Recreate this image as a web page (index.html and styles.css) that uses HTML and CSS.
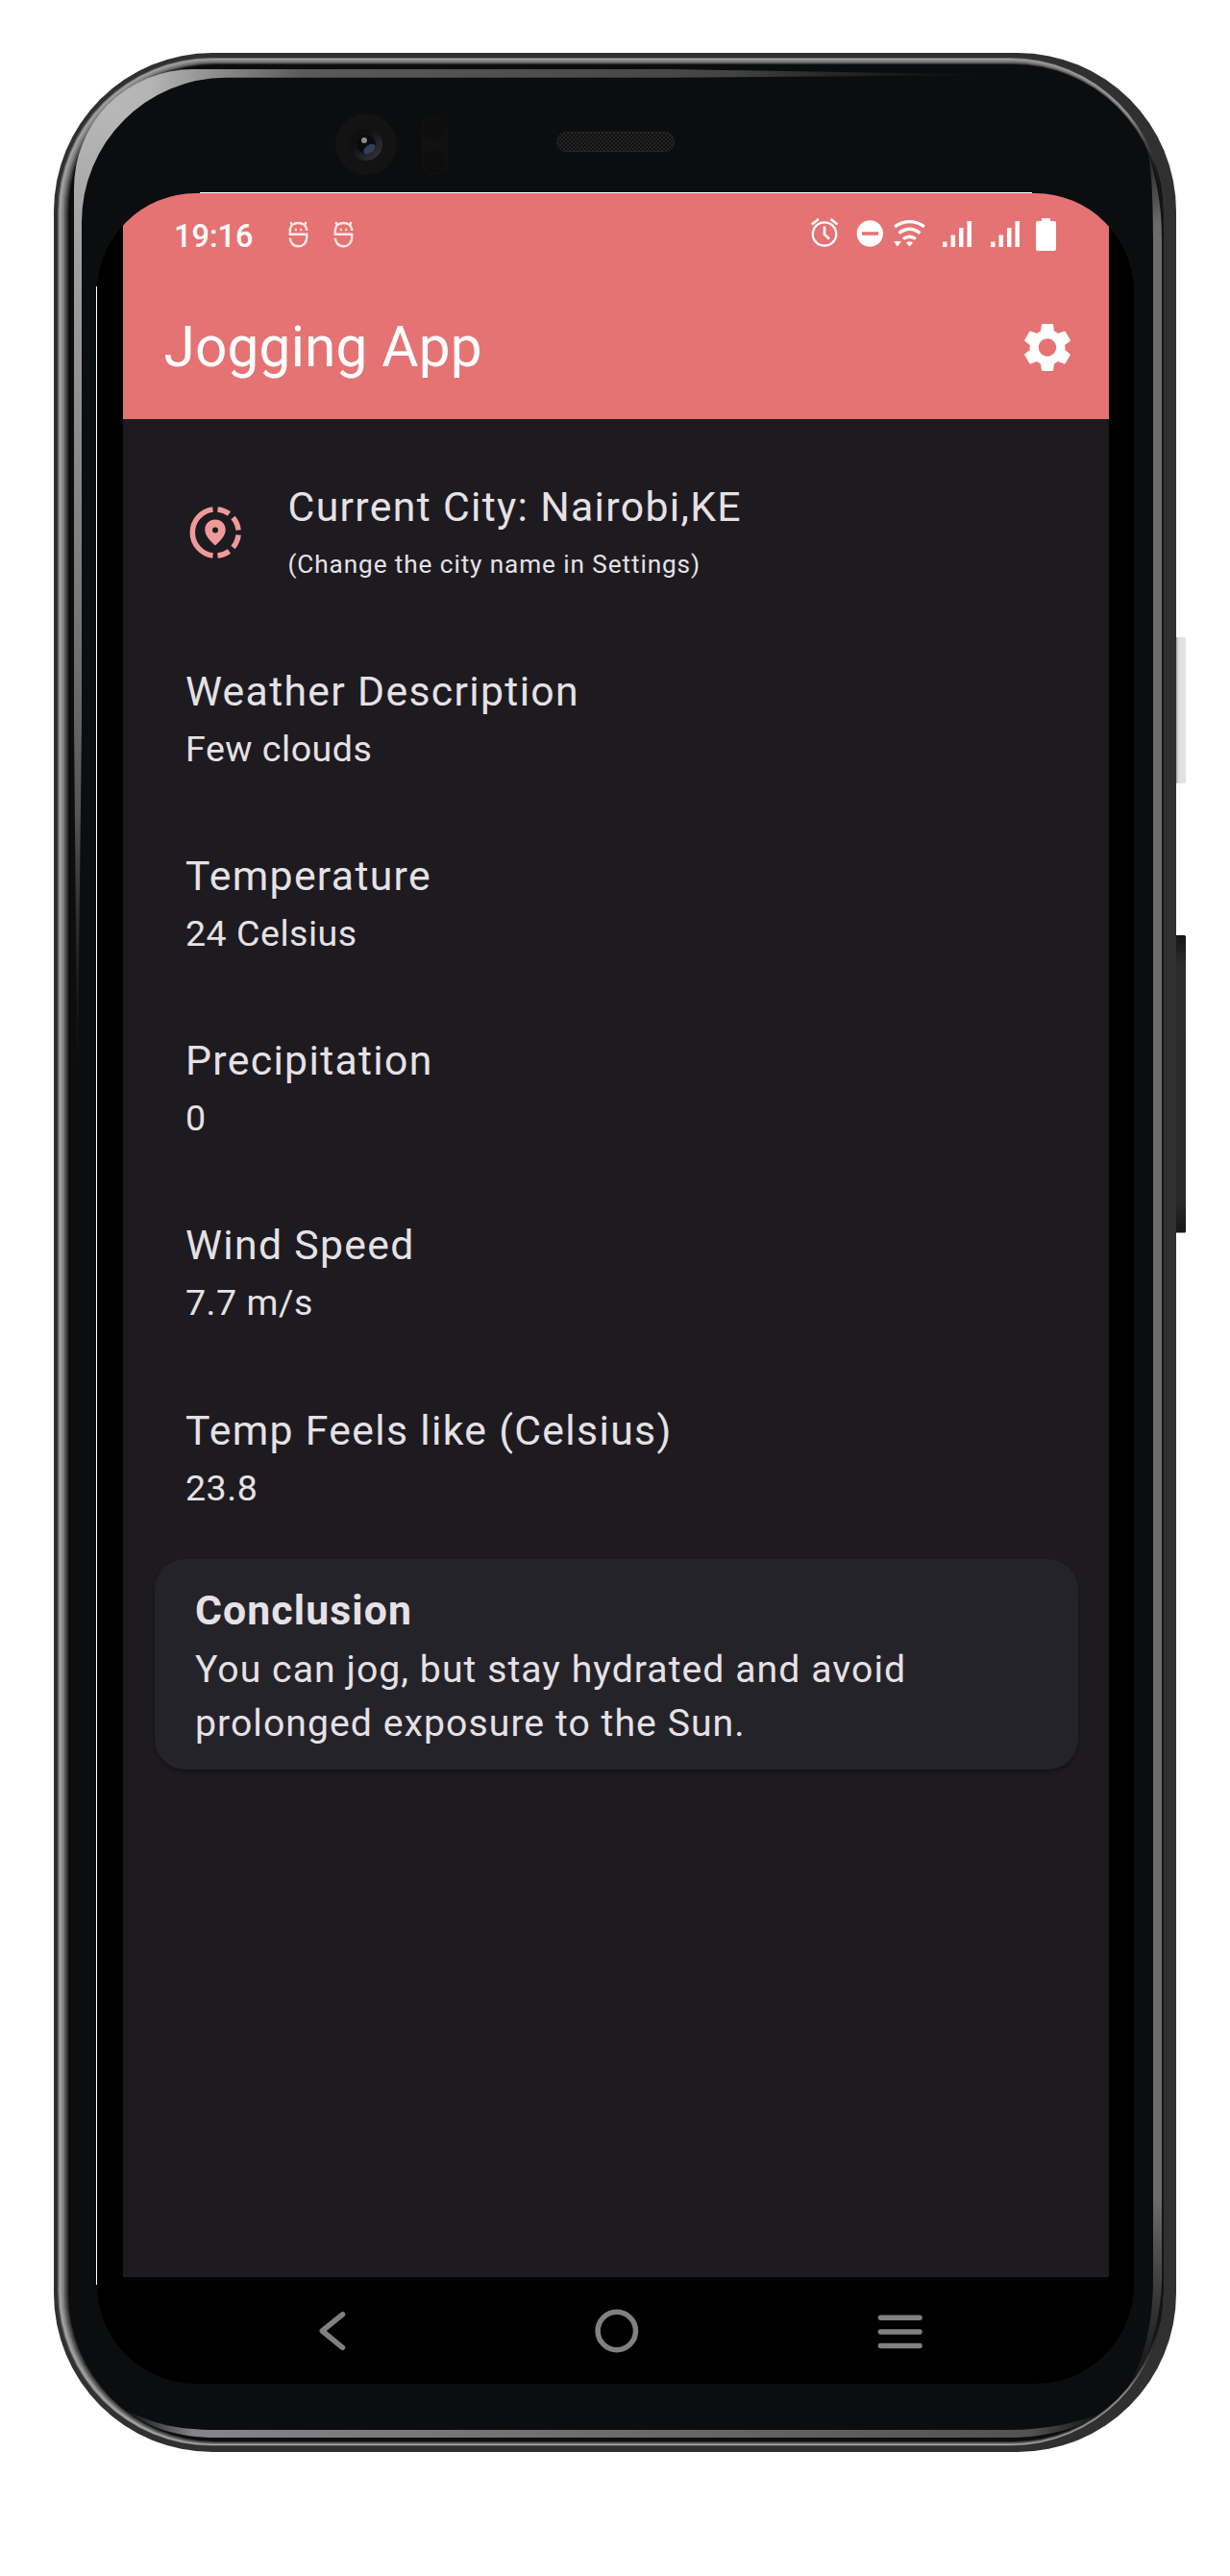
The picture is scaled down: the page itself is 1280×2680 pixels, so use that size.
FILE: index.html
```html
<!DOCTYPE html>
<html lang="en">
<head>
<meta charset="utf-8">
<title>Jogging App</title>
<link rel="stylesheet" href="styles.css">
</head>
<body>
<main class="phone">
  <svg class="phone-art" viewBox="0 0 1280 2680" aria-hidden="true">
    <defs>
      <linearGradient id="shade" gradientUnits="userSpaceOnUse" x1="1175" y1="0" x2="1207" y2="0">
        <stop offset="0" stop-color="#0c0d0e" stop-opacity="0"/><stop offset="1" stop-color="#141415"/>
      </linearGradient>
      <linearGradient id="fadeLeft" gradientUnits="userSpaceOnUse" x1="0" y1="110" x2="0" y2="1136">
        <stop offset="0" stop-color="#b8b8b8"/><stop offset=".12" stop-color="#a4a4a4"/><stop offset=".5" stop-color="#7a7a7a"/><stop offset=".72" stop-color="#555"/><stop offset="1" stop-color="#222" stop-opacity="0"/>
      </linearGradient>
      <linearGradient id="fadeTop" gradientUnits="userSpaceOnUse" x1="110" y1="0" x2="1040" y2="0">
        <stop offset="0" stop-color="#b8b8b8"/><stop offset=".05" stop-color="#b4b4b4"/><stop offset=".22" stop-color="#5a5a5a"/><stop offset=".7" stop-color="#444"/><stop offset="1" stop-color="#222" stop-opacity="0"/>
      </linearGradient>
      <linearGradient id="fadeRight" gradientUnits="userSpaceOnUse" x1="0" y1="140" x2="0" y2="2500">
        <stop offset="0" stop-color="#6c6c6e" stop-opacity="0"/><stop offset=".04" stop-color="#6c6c6e"/><stop offset=".91" stop-color="#6c6c6e"/><stop offset="1" stop-color="#555" stop-opacity="0"/>
      </linearGradient>
      <linearGradient id="fadeBottom" gradientUnits="userSpaceOnUse" x1="130" y1="0" x2="1155" y2="0">
        <stop offset="0" stop-color="#858587" stop-opacity="0"/><stop offset=".07" stop-color="#858587"/><stop offset=".92" stop-color="#525252"/><stop offset="1" stop-color="#444" stop-opacity="0"/>
      </linearGradient>
      <linearGradient id="lens" x1="0" y1="0" x2="1" y2="1"><stop offset=".35" stop-color="#101011"/><stop offset="1" stop-color="#3a3a3d"/></linearGradient>
      <linearGradient id="keyLight" x1="0" y1="0" x2="1" y2="0"><stop offset=".1" stop-color="#999"/><stop offset=".4" stop-color="#e0e0e0"/><stop offset="1" stop-color="#e4e4e4"/></linearGradient>
      <linearGradient id="keyDark" x1="0" y1="0" x2="0" y2="1"><stop offset="0" stop-color="#151515"/><stop offset=".1" stop-color="#2c2c2c"/><stop offset=".9" stop-color="#292929"/><stop offset="1" stop-color="#161616"/></linearGradient>
      <pattern id="mesh" width="4" height="4" patternUnits="userSpaceOnUse"><rect width="4" height="4" fill="#101010"/><path d="M0 0h2v2H0zM2 2h2v2H2z" fill="#232323"/></pattern>
    </defs>
    <rect x="1222" y="663" width="12" height="152" rx="1.500" fill="url(#keyLight)"/>
    <rect x="1222" y="973" width="12" height="309.500" rx="1.500" fill="url(#keyDark)"/>
    <rect x="56" y="55" width="1168" height="2496" rx="165" fill="#303030"/>
    <rect x="60" y="60" width="1151" height="2484.500" rx="160" fill="#6a6a6a"/>
    <rect x="61.500" y="61" width="1149" height="2483" rx="159" fill="#a4a4a4"/>
    <rect x="63.500" y="62" width="1146.500" height="2481" rx="158" fill="#8c8c8c"/>
    <rect x="65.500" y="63.500" width="1144" height="2479" rx="157" fill="#767676"/>
    <rect x="67" y="65" width="1142" height="2477" rx="156" fill="#555"/>
    <rect x="69" y="66" width="1139.500" height="2475" rx="155" fill="#333"/>
    <rect x="71" y="67" width="1137" height="2473" rx="153" fill="#0c0d0e"/>
    <rect x="62" y="62" width="1147" height="2481" rx="158" fill="none" stroke="url(#shade)" stroke-width="4"/>
    <path d="M80.500 1136L77 750V197A125 125 0 0 1 112.600 108.600L129 125A150 150 0 0 0 85 231V750Z" fill="url(#fadeLeft)"/>
    <path d="M112 109.200A125 125 0 0 1 201 72H700L1040 78L700 80.700H235A150 150 0 0 0 128.400 125.600Z" fill="url(#fadeTop)"/>
    <path d="M1192 145C1204 190 1209 210 1209 250V2370C1208 2420 1192 2470 1165 2500C1190 2460 1200 2420 1200 2370V250C1200 200 1198 170 1192 145Z" fill="url(#fadeRight)"/>
    <path d="M130 2507C160 2522 185 2528 225 2528H1050C1090 2528 1125 2520 1155 2507C1125 2526 1090 2536 1050 2536H225C185 2536 155 2526 130 2507Z" fill="url(#fadeBottom)"/>
    <circle cx="381" cy="150" r="32" fill="#131313"/>
    <circle cx="381" cy="150" r="17" fill="url(#lens)"/>
    <circle cx="381" cy="150" r="10" fill="#0b0b0e"/>
    <ellipse cx="384.500" cy="155" rx="7" ry="4" transform="rotate(-35 384.500 155)" fill="#353d5c"/>
    <circle cx="379" cy="146" r="3" fill="#8c8c8c"/>
    <rect x="438" y="120" width="28" height="62" rx="14" fill="#111"/>
    <circle cx="452" cy="133.500" r="11.500" fill="#0e0e0e"/><circle cx="452" cy="168" r="11.500" fill="#0e0e0e"/>
    <rect x="579.500" y="137.500" width="122" height="20" rx="10" fill="url(#mesh)" stroke="#252525"/>
    <path d="M208 200.500H1074" stroke="#fff"/>
    <path d="M100.500 298V2377" stroke="#fff"/>
  </svg>

  <section class="display">
    <div class="app">
      <header class="top">
        <div class="status">
          <span class="clock">19:16</span>
          <svg class="badge" viewBox="0 0 21 28"><use href="#mascot"/></svg>
          <svg class="badge badge-next" viewBox="0 0 21 28"><g id="mascot" fill="none" stroke="#ffe9e8" stroke-width="2.400"><path d="M19.200 10V9.500C19 5 15.500 2 10.500 2S2 5 1.800 9.500V13.800H19.200V17.500C19.200 22.500 15.500 26.300 10.500 26.300S2 22.500 1.800 17.800"/><path d="M4 4.500L2.500 1M17 4.500L18.500 1" /><path d="M6.800 9h2M12.200 9h2"/></g></svg>
          <svg class="indicators" viewBox="0 0 256 36">
            <g fill="none" stroke="#fff" stroke-width="2.300"><circle cx="14" cy="17.500" r="12.200"/><path d="M14 9.500v8.500l5 4.500M.8 7.500l7-5.500M20.500 2l7 5.500" stroke-width="2.600"/></g>
            <circle cx="61.300" cy="17" r="13.700" fill="#fff"/><path d="M53 17h17" stroke="#e57373" stroke-width="3.500"/>
            <g fill="none" stroke="#fff" stroke-width="3.200"><path d="M87 9.800Q102.500-.5 118 9.800M91.500 16.500Q102.500 8 113.500 16.500M96 22.500Q102.500 18 109 22.500"/></g>
            <path d="M86 25h8l-4 5.500zM99 26.500q3.500-2.500 7 0l-3.500 4z" fill="#fff"/>
            <path d="M137 25.500h4.500v5.500H137zM145.500 18.500h4.500V31h-4.500zM154 11h4.500v20H154zM162.500 4h4.500v27h-4.500zM187 25.500h4.500v5.500H187zM195.500 18.500h4.500V31h-4.500zM204 11h4.500v20H204zM212.500 4h4.500v27h-4.500z" fill="#fff"/>
            <path d="M240 1h9v3h4q2 0 2 2v27q0 2-2 2h-17q-2 0-2-2V6q0-2 2-2h4z" fill="#fff"/>
          </svg>
        </div>
        <div class="title-bar">
          <h1>Jogging App</h1>
          <svg class="gear" viewBox="1.900 1.600 20.200 20.800"><path fill="#fff" d="M19.140 12.940c.04-.3.060-.61.060-.94 0-.32-.02-.64-.07-.94l2.030-1.580c.18-.14.23-.41.120-.61l-1.920-3.320c-.12-.22-.37-.29-.59-.22l-2.390.96c-.5-.38-1.030-.7-1.620-.94l-.36-2.540c-.04-.24-.24-.41-.48-.41h-3.840c-.24 0-.43.17-.47.41l-.36 2.540c-.59.24-1.130.57-1.620.94l-2.390-.96c-.22-.08-.47 0-.59.22L2.740 8.870c-.12.21-.08.47.12.61l2.030 1.580c-.05.3-.09.63-.09.94s.02.64.07.94l-2.030 1.580c-.18.14-.23.41-.12.61l1.920 3.320c.12.22.37.29.59.22l2.390-.96c.5.38 1.030.7 1.620.94l.36 2.540c.05.24.24.41.48.41h3.840c.24 0 .44-.17.47-.41l.36-2.540c.59-.24 1.130-.56 1.620-.94l2.390.96c.22.08.47 0 .59-.22l1.920-3.320c.12-.22.07-.47-.12-.61l-2.010-1.580zM12 15.600c-1.980 0-3.600-1.620-3.600-3.600s1.620-3.600 3.600-3.600 3.600 1.620 3.600 3.600-1.620 3.600-3.600 3.600z"/></svg>
        </div>
      </header>

      <div class="content">
        <div class="city">
          <svg class="pin" viewBox="0 0 54 54">
            <g fill="none" stroke="#ef9a9a" stroke-width="5.500"><path d="M24.500 2.900A24.300 24.300 0 0 0 24.500 51.100M29.500 2.900A24.300 24.300 0 0 1 41.500 7.500M45.500 11.500A24.300 24.300 0 0 1 51.100 24.500M51.100 29.500A24.300 24.300 0 0 1 45.500 42.500M41.500 46.500A24.300 24.300 0 0 1 29.500 51.100"/></g>
            <path fill="#ef9a9a" fill-rule="evenodd" d="M27 13.500c-6 0-10.700 4.600-10.700 10.500C16.300 30 21 35.300 27 40.500 33 35.300 37.700 30 37.700 24c0-5.900-4.700-10.500-10.700-10.500zM27 21.500a3 3 0 1 1 0 6 3 3 0 0 1 0-6z"/>
          </svg>
          <div class="city-text">
            <h2>Current City: Nairobi,KE</h2>
            <p class="hint">(Change the city name in Settings)</p>
          </div>
        </div>
        <dl class="readings">
          <div class="reading"><dt>Weather Description</dt><dd>Few clouds</dd></div>
          <div class="reading"><dt>Temperature</dt><dd>24 Celsius</dd></div>
          <div class="reading"><dt>Precipitation</dt><dd>0</dd></div>
          <div class="reading"><dt>Wind Speed</dt><dd>7.7 m/s</dd></div>
          <div class="reading"><dt>Temp Feels like (Celsius)</dt><dd>23.8</dd></div>
        </dl>
        <article class="card">
          <h2>Conclusion</h2>
          <p>You can jog, but stay hydrated and avoid<br>prolonged exposure to the Sun.</p>
        </article>
      </div>
    </div>

    <nav class="nav">
      <svg viewBox="0 0 48 48"><path d="M35.500 6.800L14.300 24L35.500 41.300"/></svg>
      <svg viewBox="0 0 48 48"><circle cx="24.800" cy="24" r="19.700"/></svg>
      <svg viewBox="0 0 48 48"><path d="M3.400 10.200h40.600M3.400 24.900h40.600M3.400 39.600h40.600"/></svg>
    </nav>
  </section>
</main>
</body>
</html>
```
FILE: styles.css
```css
* { box-sizing: border-box; }
body { margin: 0; background: #fff; font-family: Roboto, sans-serif; }
h1, h2, p, dl, dt, dd { margin: 0; font-weight: 400; }
svg { display: block; flex: none; }

.phone {
  position: relative;
  width: 1280px;
  height: 2680px;
  padding: 201px 100px 200px 101px;
}
.phone-art { position: absolute; inset: 0; width: 1280px; height: 2680px; }

.display {
  position: relative;
  display: flex;
  flex-direction: column;
  height: 2279px;
  background: #000;
  border-radius: 103px;
  overflow: hidden;
}
.app {
  width: 1026px;
  height: 2168px;
  margin-left: 27px;
  background: #1d1b20;
  color: #e6e1e5;
}
.top { height: 235px; background: #e57373; color: #fff; }

.status { display: flex; align-items: flex-start; height: 85px; padding: 25px 54px 0 53px; }
.clock { width: 119px; font-size: 32.500px; line-height: 40px; font-weight: 500; }
.badge { width: 21px; height: 28px; margin-top: 4px; }
.badge-next { margin-left: 26px; }
.indicators { width: 256px; height: 36px; margin: 0 0 0 auto; }

.title-bar { display: flex; align-items: center; justify-content: space-between; height: 150px; padding: 0 38px 0 42.500px; }
h1 { font-size: 58.500px; line-height: 68px; letter-spacing: .2px; }
.gear { width: 52px; height: 53px; }

.content { display: flex; flex-direction: column; }
.city { display: flex; align-items: center; height: 186px; padding: 50px 0 0 69px; gap: 48.500px; }
.city-text { padding-top: 6.500px; }
.city h2, .reading dt { font-size: 42.750px; line-height: 60px; letter-spacing: 1.320px; }
.hint { font-size: 26.200px; line-height: 60px; letter-spacing: .890px; }

.readings { display: grid; grid-auto-rows: 192.300px; height: 940px; margin-top: 66.500px; padding-left: 65px; }
.reading dd { font-size: 37.600px; line-height: 60px; letter-spacing: .5px; }

.card {
  height: 219px;
  margin: -6.500px 32px 0 33px;
  padding: 23px 42px;
  border-radius: 32px;
  background: #25232a;
  box-shadow: 0 3px 4px rgba(0, 0, 0, .3);
}
.card h2 { font-size: 42.750px; line-height: 60px; font-weight: 700; letter-spacing: 1.100px; }
.card p { margin-top: 5px; font-size: 39.200px; line-height: 55.700px; letter-spacing: 1.040px; }
.pin { width: 54px; height: 54px; }

.nav { display: flex; justify-content: space-between; align-items: center; height: 111px; padding: 0 219.500px; }
.nav svg { width: 48px; height: 48px; fill: none; stroke: #808080; stroke-width: 5.500; stroke-linecap: round; stroke-linejoin: round; }
```
